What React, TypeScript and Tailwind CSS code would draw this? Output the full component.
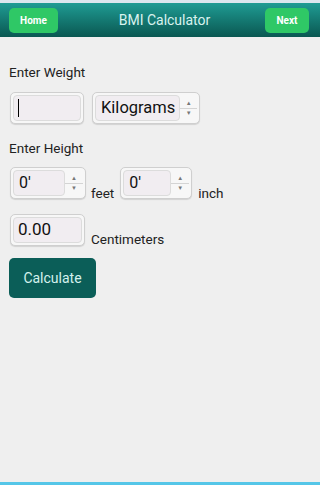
import { ReactNode } from 'react';

function Spinner() {
  return (
    <div className="flex w-[18px] flex-col items-center justify-center self-stretch">
      <span className="flex h-[12px] items-end text-[6px] leading-none text-[#777]">▲</span>
      <span className="my-[2px] h-px w-full bg-[#d4d4d4]" />
      <span className="flex h-[12px] items-start text-[6px] leading-none text-[#777]">▼</span>
    </div>
  );
}

function Field({ width, children, spinner }: { width: string; children?: ReactNode; spinner?: boolean }) {
  return (
    <div
      className={`flex h-[32px] items-stretch rounded-[5px] border border-[#cfcfcf] bg-[#f7f7f7] p-[2px] shadow-[0_1px_1px_rgba(0,0,0,0.12)] ${width}`}
    >
      <div className="flex flex-1 items-center rounded-[4px] border border-[#dcdcdc] bg-[#f1edf1] px-[4px] text-[17px] text-[#111]">
        {children}
      </div>
      {spinner && <Spinner />}
    </div>
  );
}

export default function App() {
  return (
    <div className="flex h-[485px] w-[320px] flex-col bg-[#efefef] font-['Roboto',sans-serif]">
      <div className="h-[3px] bg-[#dbe7ee]" />
      <header className="flex h-[34px] items-center justify-between bg-gradient-to-b from-[#1f9c94] to-[#0a5852] px-[9px]">
        <button className="flex h-[25px] w-[49px] items-center justify-center rounded-[5px] bg-[#2fc866] text-[10px] font-bold text-white">
          Home
        </button>
        <h1 className="ml-[6px] text-[14px] text-[#d9f3ef]">BMI Calculator</h1>
        <button className="mr-[2px] flex h-[25px] w-[44px] items-center justify-center rounded-[5px] bg-[#2fc866] text-[10px] font-bold text-white">
          Next
        </button>
      </header>
      <main className="flex flex-1 flex-col px-[9px] pt-[27px] text-[#222]">
        <p className="text-[13.5px] leading-[16px]">Enter Weight</p>
        <div className="mt-[12px] flex items-center gap-[8px] pl-px">
          <Field width="w-[74px]">
            <span className="h-[18px] w-px bg-black" />
          </Field>
          <Field width="w-[108px]" spinner>
            <span className="pl-px text-[16.5px]">Kilograms</span>
          </Field>
        </div>
        <p className="mt-[16px] text-[13.5px] leading-[16px]">Enter Height</p>
        <div className="mt-[11px] flex items-end pl-px">
          <Field width="w-[76px]" spinner>
            <span className="pl-px text-[16px]">0'</span>
          </Field>
          <span className="relative top-[2px] ml-[5px] mr-[6px] text-[13.5px] leading-[16px]">feet</span>
          <Field width="w-[72px]" spinner>
            <span className="pl-px text-[16px]">0'</span>
          </Field>
          <span className="relative top-[2px] ml-[6px] text-[13.5px] leading-[16px]">inch</span>
        </div>
        <div className="mt-[15px] flex items-end pl-px">
          <Field width="w-[75px]">
            <span className="text-[17px]">0.00</span>
          </Field>
          <span className="relative top-[1px] ml-[6px] text-[13.5px] leading-[16px]">Centimeters</span>
        </div>
        <button className="mt-[12px] flex h-[40px] w-[87px] items-center justify-center rounded-[5px] bg-[#0b5e58] text-[14px] text-[#d4f1ed]">
          Calculate
        </button>
      </main>
      <div className="h-[3px] bg-[#55c6e8]" />
    </div>
  );
}
